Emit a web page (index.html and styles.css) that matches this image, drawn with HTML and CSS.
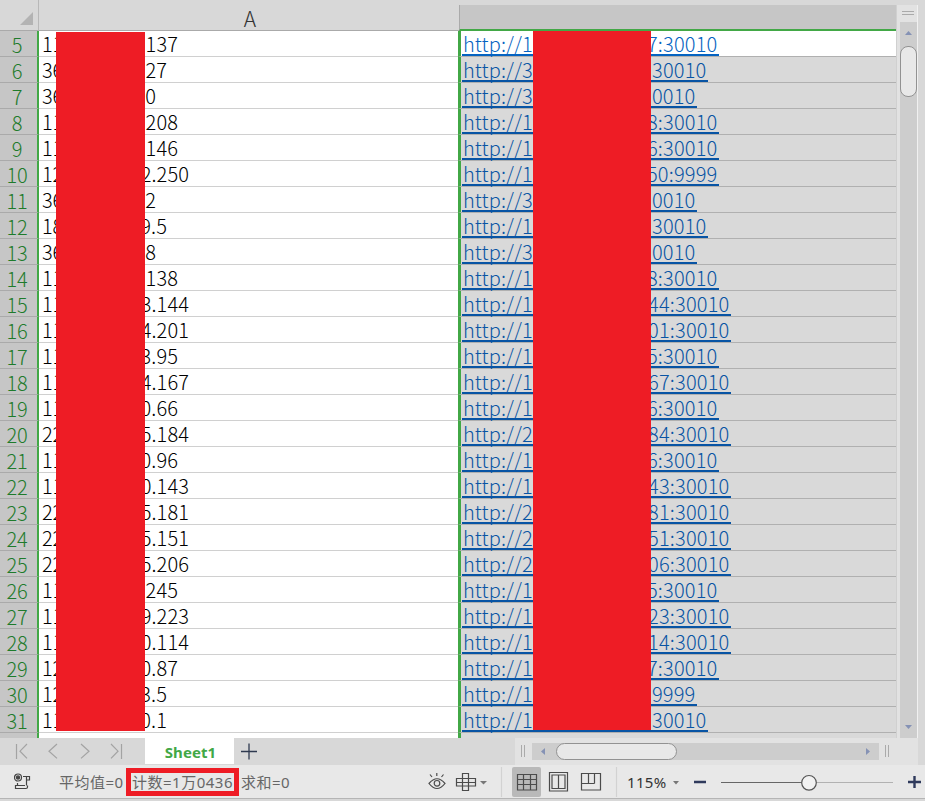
FILE: index.html
```html
<!DOCTYPE html>
<html lang="zh-CN">
<head>
<meta charset="utf-8">
<title>Sheet1</title>
<link rel="stylesheet" href="styles.css">
</head>
<body>
<div class="app">
  <div class="main">
    <div class="sheet">
      <div class="head"><div class="corner"><i></i></div><div class="col-a">A</div><div class="col-b"></div></div>
      <div class="rows">
        <div class="row active"><b>5</b><p><span>11</span><em class="k2">137</em></p><p><a class="w2"><span>http://1</span><em>7:30010</em></a></p></div>
        <div class="row"><b>6</b><p><span>36</span><em class="k1">27</em></p><p><a class="w1"><span>http://3</span><em>:30010</em></a></p></div>
        <div class="row"><b>7</b><p><span>36</span><em class="k0">0</em></p><p><a class="w0"><span>http://3</span><em>0010</em></a></p></div>
        <div class="row"><b>8</b><p><span>11</span><em class="k2">208</em></p><p><a class="w2"><span>http://1</span><em>8:30010</em></a></p></div>
        <div class="row"><b>9</b><p><span>11</span><em class="k2">146</em></p><p><a class="w2"><span>http://1</span><em>6:30010</em></a></p></div>
        <div class="row"><b>10</b><p><span>12</span><em class="k3">2.250</em></p><p><a class="w2"><span>http://1</span><em>50:9999</em></a></p></div>
        <div class="row"><b>11</b><p><span>36</span><em class="k0">2</em></p><p><a class="w0"><span>http://3</span><em>0010</em></a></p></div>
        <div class="row"><b>12</b><p><span>18</span><em class="k1">9.5</em></p><p><a class="w1"><span>http://1</span><em>:30010</em></a></p></div>
        <div class="row"><b>13</b><p><span>36</span><em class="k0">8</em></p><p><a class="w0"><span>http://3</span><em>0010</em></a></p></div>
        <div class="row"><b>14</b><p><span>11</span><em class="k2">138</em></p><p><a class="w2"><span>http://1</span><em>8:30010</em></a></p></div>
        <div class="row"><b>15</b><p><span>11</span><em class="k3">3.144</em></p><p><a class="w3"><span>http://1</span><em>44:30010</em></a></p></div>
        <div class="row"><b>16</b><p><span>11</span><em class="k3">4.201</em></p><p><a class="w3"><span>http://1</span><em>01:30010</em></a></p></div>
        <div class="row"><b>17</b><p><span>11</span><em class="k2">3.95</em></p><p><a class="w2"><span>http://1</span><em>5:30010</em></a></p></div>
        <div class="row"><b>18</b><p><span>11</span><em class="k3">4.167</em></p><p><a class="w3"><span>http://1</span><em>67:30010</em></a></p></div>
        <div class="row"><b>19</b><p><span>11</span><em class="k2">0.66</em></p><p><a class="w2"><span>http://1</span><em>6:30010</em></a></p></div>
        <div class="row"><b>20</b><p><span>22</span><em class="k3">5.184</em></p><p><a class="w3"><span>http://2</span><em>84:30010</em></a></p></div>
        <div class="row"><b>21</b><p><span>11</span><em class="k2">0.96</em></p><p><a class="w2"><span>http://1</span><em>6:30010</em></a></p></div>
        <div class="row"><b>22</b><p><span>11</span><em class="k3">0.143</em></p><p><a class="w3"><span>http://1</span><em>43:30010</em></a></p></div>
        <div class="row"><b>23</b><p><span>22</span><em class="k3">5.181</em></p><p><a class="w3"><span>http://2</span><em>81:30010</em></a></p></div>
        <div class="row"><b>24</b><p><span>22</span><em class="k3">5.151</em></p><p><a class="w3"><span>http://2</span><em>51:30010</em></a></p></div>
        <div class="row"><b>25</b><p><span>22</span><em class="k3">5.206</em></p><p><a class="w3"><span>http://2</span><em>06:30010</em></a></p></div>
        <div class="row"><b>26</b><p><span>11</span><em class="k2">245</em></p><p><a class="w2"><span>http://1</span><em>5:30010</em></a></p></div>
        <div class="row"><b>27</b><p><span>11</span><em class="k3">9.223</em></p><p><a class="w3"><span>http://1</span><em>23:30010</em></a></p></div>
        <div class="row"><b>28</b><p><span>11</span><em class="k3">0.114</em></p><p><a class="w3"><span>http://1</span><em>14:30010</em></a></p></div>
        <div class="row"><b>29</b><p><span>12</span><em class="k2">0.87</em></p><p><a class="w2"><span>http://1</span><em>7:30010</em></a></p></div>
        <div class="row"><b>30</b><p><span>12</span><em class="k1">3.5</em></p><p><a class="w0"><span>http://1</span><em>9999</em></a></p></div>
        <div class="row"><b>31</b><p><span>11</span><em class="k1">0.1</em></p><p><a class="w1"><span>http://1</span><em>:30010</em></a></p></div>
        <div class="row"><b></b><p></p><p></p></div>
      </div>
      <div class="mask mask-a"></div>
      <div class="mask mask-b"></div>
    </div>
    <div class="vscroll">
      <div class="grip"></div>
      <div class="vtrack">
        <svg width="7" height="4"><path d="M0 4L3.5 0L7 4z"/></svg>
        <div class="vthumb"></div>
        <svg width="7" height="4"><path d="M0 0L3.5 4L7 0z"/></svg>
      </div>
    </div>
  </div>
  <div class="tabs">
    <svg class="nav" width="144" height="27" fill="none" stroke="#a3a3a3" stroke-width="1.2"><path d="M16.5 6v15M27 6l-7 7.200l7 7.200M57 6l-8 7.200l8 7.200M81 6l8 7.200l-8 7.200M111 6l7 7.200l-7 7.200M121.500 6v15"/></svg>
    <div class="tab">Sheet1</div>
    <svg class="plus" width="30" height="27" stroke="#2f3a50" stroke-width="1.300"><path d="M7 13.500h16M15 5.500v16"/></svg>
    <div class="hscroll">
      <div class="vgrip"></div>
      <div class="htrack">
        <svg width="4" height="7"><path d="M4 0v7L0 3.500z"/></svg>
        <div class="hthumb"></div>
        <svg width="4" height="7"><path d="M0 0v7L4 3.500z"/></svg>
      </div>
      <div class="vgrip"></div>
    </div>
  </div>
  <div class="status">
    <svg class="macro" width="17" height="17" fill="none" stroke="#444" stroke-width="1.200"><circle cx="4" cy="4.500" r="3.500"/><circle cx="4" cy="4.500" r="1.600" fill="#444"/><path d="M9 3.500h6.500v3.500h-2.500M12.500 3.500v9M3.500 10v2.500M11 12.500H1.500v3h10.500q1.500 0 1.500-1.500v-1.500"/></svg>
    <span class="avg">平均值=0</span><span class="count">计数=1万0436</span><span class="sum">求和=0</span>
    <svg class="views" width="190" height="33" fill="none" stroke="#4b4b4b" stroke-width="1.200">
      <path d="M1 18.500q8-9.500 16 0q-8 10-16 0zM8.800 8v3M2 9.500l2 2.500M15.500 9.500l-2 2.500"/><circle cx="9" cy="18.300" r="2.800"/>
      <path d="M34.500 8.500h6v17h-6zM28.500 13.500h19v7.500H28.500zM28.500 17.500h19"/>
      <path d="M52 16h7l-3.500 3.500z" fill="#777" stroke="none"/>
      <path d="M73.500 2v30M188.500 2v30" stroke="#d2d2d2"/>
      <rect x="84" y="2" width="29" height="30" rx="2" fill="#b9b9b9" stroke="none"/>
      <path d="M89.500 9.500h19v15.500h-19zM89.500 14.500h19M89.500 19.500h19M95.500 9.500v15.500M102.500 9.500v15.500"/>
      <path d="M121.500 7.500h18v18.500h-18zM124 10h13v13.500h-13zM130.500 10v13.500"/>
      <path d="M153.500 8.500h19v16.500h-19zM160.500 8.500v10M166.500 8.500v10M153.500 18.500h13"/>
    </svg>
    <div class="zoom"><span>115%</span>
      <svg width="250" height="33" fill="none"><path d="M5 16h6l-3 3.500z" fill="#777"/><path d="M26 17h12M240 17h13M246.500 11v12" stroke="#2f3a5c" stroke-width="2.400"/><path d="M53 17.500h88" stroke="#666"/><path d="M141 17.500h84" stroke="#b2b2b2"/><circle cx="141" cy="17.800" r="7.300" fill="#f2f2f2" stroke="#555" stroke-width="1.200"/></svg>
    </div>
  </div>
</div>
</body>
</html>
```
FILE: styles.css
```css
* { box-sizing: border-box; }
body { margin: 0; background: #d8d8d8; font-family: "Noto Sans CJK SC", sans-serif; overflow: hidden; }
svg { display: block; flex: none; }
.app { width: 925px; height: 801px; }
.main { display: flex; height: 738px; }
.sheet { position: relative; width: 896px; height: 738px; overflow: hidden; }
.head { display: flex; height: 31px; }
.corner { width: 39px; height: 31px; padding: 12px 0 0 20px; border-bottom: 1px solid #aaa; border-right: 1px solid #b8b8b8; }
.corner i { display: block; width: 13px; height: 13px; background: #b3b3b3; clip-path: polygon(100% 0, 100% 100%, 0 100%); }
.col-a { width: 420px; padding-left: 2px; border-bottom: 1px solid #aaa; text-align: center; font-size: 21px; font-weight: 300; line-height: 37px; color: #333; }
.col-b { width: 437px; height: 26px; margin-top: 5px; background: #c6c6c6; border-bottom: 2px solid #42a846; border-left: 1px solid #aaa; }
.row { display: grid; grid-template-columns: 39px 419px 438px; height: 26px; font-size: 20px; font-weight: 300; letter-spacing: -0.1px; line-height: 25px; color: #000; }
.row b { height: 26px; padding-right: 3px; border-right: 2px solid #42a846; border-bottom: 1px solid #aaa; background: #c6c6c6; color: #1e7b2b; text-align: center; font-weight: 300; line-height: 27px; }
.row p { display: flex; margin: 0; height: 26px; border-bottom: 1px solid #d0d0d0; background: #fff; padding-left: 3px; }
.row p + p { border-left: 3px solid #42a846; border-bottom-color: #b0b0b0; background: #d9d9d9; padding-left: 1px; }
.row.active p + p { background: #fff; }
.row em { font-style: normal; text-align: right; letter-spacing: 0.1px; }
.row a span { letter-spacing: 0.1px; }
.row a em { letter-spacing: 0.2px; }
.row p > span { width: 22px; }
.k0 { width: 92px; }
.k1 { width: 103px; }
.k2 { width: 114px; }
.k3 { width: 125px; }
.row a { display: flex; justify-content: space-between; height: 25px; padding: 0 1px; border-bottom: 2px solid #0854a4; color: #0854a4; }
.row.active a { color: #0563c1; border-color: #0563c1; }
.w0 { width: 235px; }
.w1 { width: 246px; }
.w2 { width: 257px; }
.w3 { width: 269px; }
.row a em { margin-right: 0.5px; }
.mask { position: absolute; background: #ee1c25; }
.mask-a { left: 56px; top: 32px; width: 89px; height: 699px; }
.mask-b { left: 533px; top: 31px; width: 118px; height: 699px; }
.vscroll { width: 22px; height: 733px; margin-top: 5px; padding: 6px 0 0 4px; background: #e2e2e2; border-left: 1px solid #d0d0d0; border-right: 1px solid #f0f0f0; }
.grip { width: 12px; height: 4px; margin: 0 0 7px 1px; border: solid #aaa; border-width: 1px 0; }
.vtrack { display: flex; flex-direction: column; align-items: center; width: 17px; height: 716px; margin-left: -1px; padding-top: 9px; background: #cdcdcd; fill: #8592b5; }
.vthumb { width: 17px; height: 51px; margin: 11px 0 auto; border: 1px solid #929292; border-radius: 8px; background: #e8e8e8; }
.vtrack svg:last-child { margin-bottom: 9px; }
.tabs { display: flex; height: 27px; width: 918px; }
.nav { margin-right: 1px; }
.tab { width: 89px; height: 26px; background: #fff; color: #42a846; text-align: center; font: bold 15px/28px "Noto Sans", sans-serif; letter-spacing: 0.1px; padding-left: 2px; }
.plus { margin-right: 251px; }
.hscroll { display: flex; align-items: center; flex: 1; background: #e2e2e2; padding: 0 0 1px 6px; }
.vgrip { width: 4px; height: 12px; border: solid #aaa; border-width: 0 1px; }
.htrack { display: flex; align-items: center; width: 347px; height: 17px; margin: 0 6px 0 7px; padding: 0 9px; background: #cdcdcd; fill: #8592b5; }
.hthumb { width: 121px; height: 17px; margin: 0 auto 0 11px; border: 1px solid #929292; border-radius: 9px; background: #e8e8e8; }
.status { display: flex; align-items: center; height: 34px; background: #e8e8e8; border-bottom: 1px solid #b5b5b5; color: #666; font: 15px/24px "Noto Sans", "Noto Sans CJK SC", sans-serif; letter-spacing: 0.5px; white-space: nowrap; }
.macro { margin: 0 28px 0 14px; }
.avg { width: 67px; }
.count { width: 113px; height: 28px; padding-left: 1px; border: 5px solid #ee1c25; line-height: 19px; }
.sum { width: 189px; padding-left: 2px; }
.zoom { display: flex; align-items: center; margin-left: 9px; color: #333; letter-spacing: 0.3px; }
.zoom span { width: 41px; }
.zoom svg { overflow: visible; }
```
